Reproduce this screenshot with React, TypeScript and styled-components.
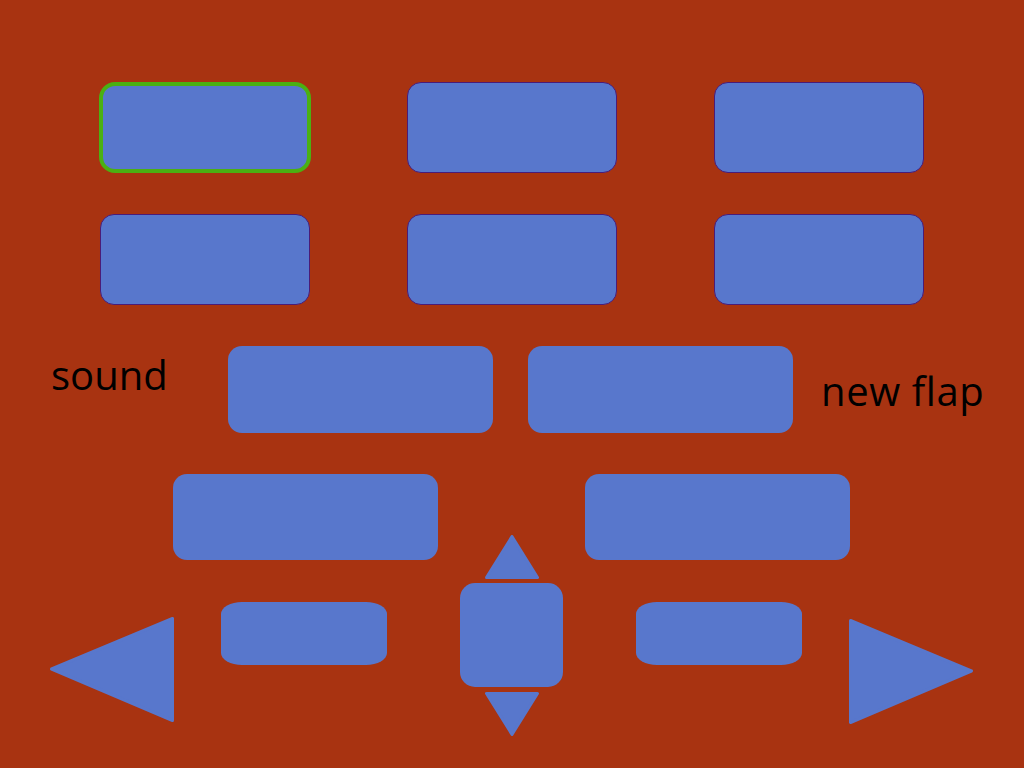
import React from "react";
import styled, { createGlobalStyle } from "styled-components";

const GlobalStyle = createGlobalStyle`
	html, body {
		margin: 0;
		padding: 0;
		background: #a83311;
	}
`;

const Screen = styled.div`
	width: 1024px;
	height: 768px;
	overflow: hidden;
	background: #a83311;
	padding-top: 82px;
	box-sizing: border-box;
	font-family: "Open Sans", "Noto Sans", sans-serif;
`;

const KeyGrid = styled.div`
	display: grid;
	grid-template-columns: repeat(3, 210px);
	grid-auto-rows: 91px;
	column-gap: 97px;
	row-gap: 41px;
	padding-left: 100px;
`;

const GridKey = styled.div<{ $selected?: boolean }>`
	box-sizing: border-box;
	background: #5877cc;
	border-radius: ${({ $selected }) => ($selected ? "16px" : "14px")};
	border: ${({ $selected }) =>
		$selected ? "4px solid #4bb012" : "1px solid #4a1c78"};
	margin: ${({ $selected }) => ($selected ? "0 -1px 0 -1px" : "0")};
`;

const LabelRow = styled.div`
	display: flex;
	align-items: flex-start;
	height: 87px;
	margin-top: 41px;
	padding-left: 51px;
`;

const Label = styled.span<{ $top: number; $width?: number; $left?: number; $spacing?: number }>`
	display: block;
	font-size: 40px;
	line-height: 40px;
	color: #000;
	white-space: nowrap;
	letter-spacing: ${({ $spacing }) => $spacing ?? 0}px;
	margin-top: ${({ $top }) => $top}px;
	margin-left: ${({ $left }) => $left ?? 0}px;
	width: ${({ $width }) => ($width ? `${$width}px` : "auto")};
`;

const WideKeys = styled.div<{ $gap: number }>`
	display: flex;
	gap: ${({ $gap }) => $gap}px;
`;

const WideKey = styled.div<{ $height: number }>`
	width: 265px;
	height: ${({ $height }) => $height}px;
	background: #5877cc;
	border-radius: 14px;
`;

const WideRow = styled.div`
	margin-top: 41px;
	padding-left: 173px;
`;

const ControlRow = styled.div`
	display: flex;
	align-items: flex-start;
	margin-top: -25px;
	padding-left: 50px;
`;

const Arrow = styled.svg<{ $top: number; $left?: number }>`
	display: block;
	flex-shrink: 0;
	margin-top: ${({ $top }) => $top}px;
	margin-left: ${({ $left }) => $left ?? 0}px;
`;

const Pill = styled.div<{ $left: number }>`
	width: 166px;
	height: 63px;
	margin-top: 67px;
	margin-left: ${({ $left }) => $left}px;
	background: #5877cc;
	border-radius: 21px / 12px;
`;

const Pad = styled.div`
	display: flex;
	flex-direction: column;
	align-items: center;
	width: 103px;
	margin-left: 73px;
`;

const PadCenter = styled.div`
	width: 103px;
	height: 104px;
	margin: 4px 0 5px;
	background: #5877cc;
	border-radius: 15px;
`;

const BLUE = "#5877cc";

function Triangle({
	w,
	h,
	points,
	top,
	left,
}: {
	w: number;
	h: number;
	points: string;
	top: number;
	left?: number;
}) {
	return (
		<Arrow width={w} height={h} viewBox={`0 0 ${w} ${h}`} $top={top} $left={left}>
			<polygon
				points={points}
				fill={BLUE}
				stroke={BLUE}
				strokeWidth={3}
				strokeLinejoin="round"
			/>
		</Arrow>
	);
}

export default function App() {
	return (
		<>
			<GlobalStyle />
			<Screen>
				<KeyGrid>
					<GridKey $selected />
					<GridKey />
					<GridKey />
					<GridKey />
					<GridKey />
					<GridKey />
				</KeyGrid>

				<LabelRow>
					<Label $top={9} $width={177}>
						sound
					</Label>
					<WideKeys $gap={35}>
						<WideKey $height={87} />
						<WideKey $height={87} />
					</WideKeys>
					<Label $top={25} $left={28} $spacing={0.6}>
						new flap
					</Label>
				</LabelRow>

				<WideRow>
					<WideKeys $gap={147}>
						<WideKey $height={86} />
						<WideKey $height={86} />
					</WideKeys>
				</WideRow>

				<ControlRow>
					<Triangle w={124} h={105} points="1.5,52 122.5,1.5 122.5,103.5" top={82} />
					<Pill $left={47} />
					<Pad>
						<Triangle w={54} h={44} points="27,1.5 52.5,42.5 1.5,42.5" top={0} />
						<PadCenter />
						<Triangle w={54} h={44} points="1.5,1.5 52.5,1.5 27,42.5" top={0} />
					</Pad>
					<Pill $left={73} />
					<Triangle w={124} h={105} points="1.5,1.5 122.5,52 1.5,103.5" top={84} left={47} />
				</ControlRow>
			</Screen>
		</>
	);
}
